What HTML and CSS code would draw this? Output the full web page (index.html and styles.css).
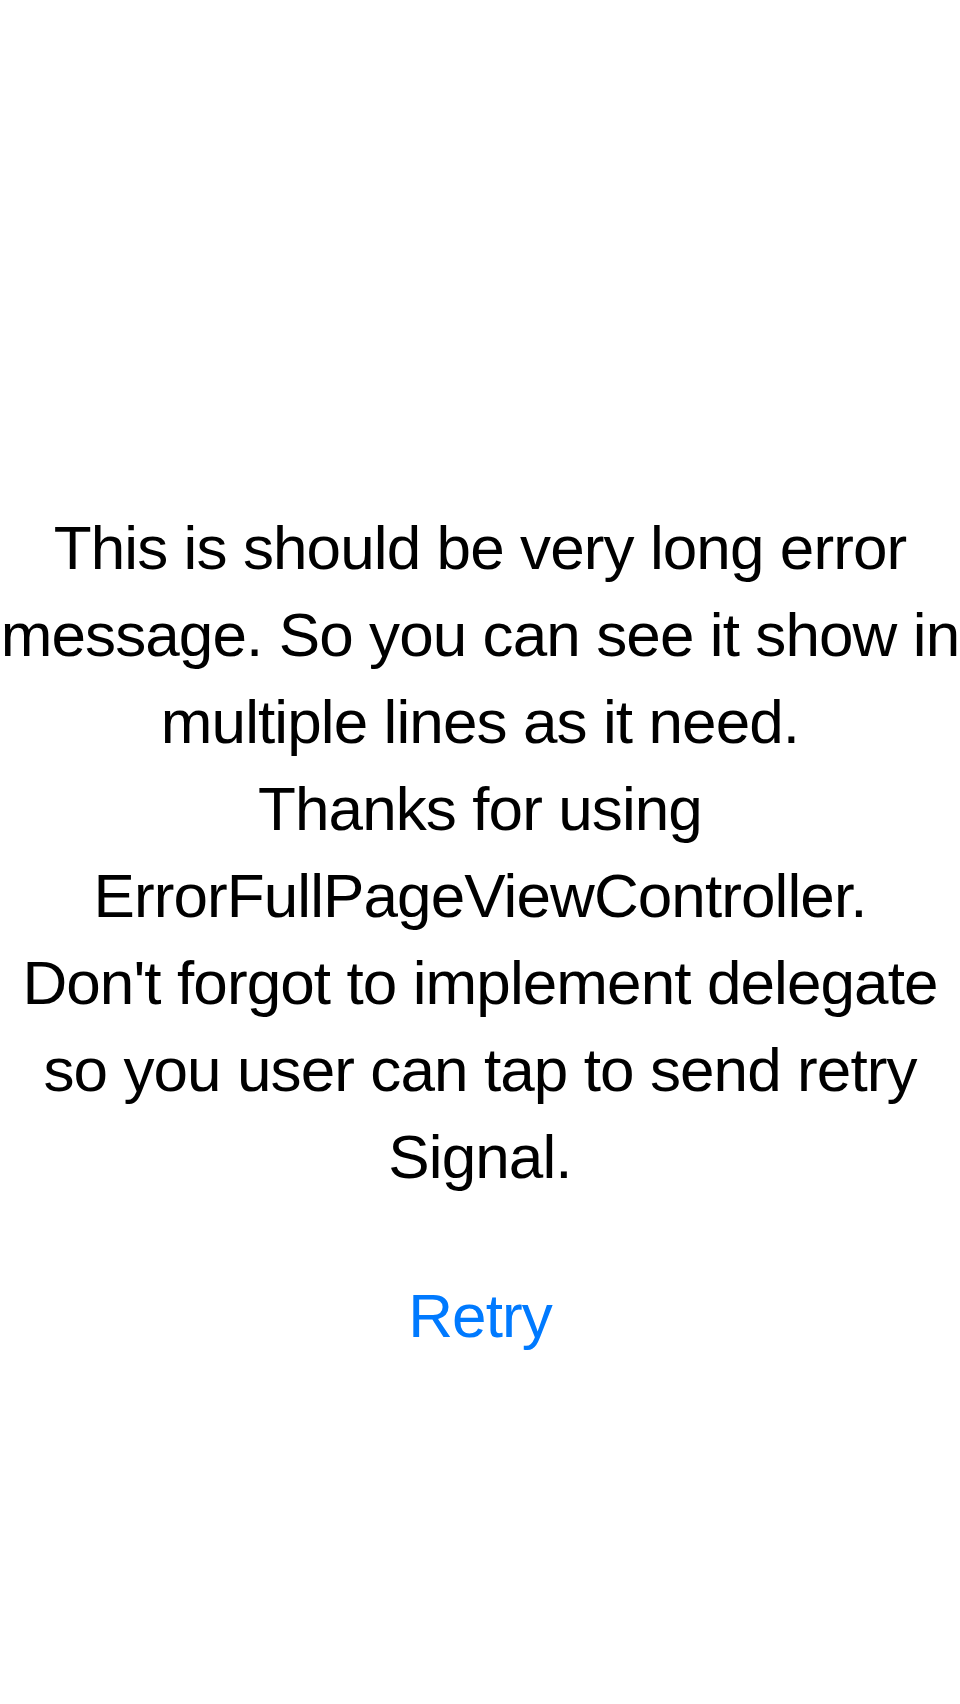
FILE: index.html
```html
<!DOCTYPE html>
<html lang="en">
<head>
<meta charset="utf-8">
<title>Error</title>
<link rel="stylesheet" href="styles.css">
</head>
<body>
<main class="error-page">
  <p class="error-message">This is should be very long error<br>message. So you can see it show in<br>multiple lines as it need.<br>Thanks for using<br>ErrorFullPageViewController.<br>Don't forgot to implement delegate<br>so you user can tap to send retry<br>Signal.</p>
  <button class="retry-button" type="button">Retry</button>
</main>
</body>
</html>
```

FILE: styles.css
```css
html, body {
  margin: 0;
  padding: 0;
  background: #ffffff;
}

.error-page {
  display: flex;
  flex-direction: column;
  align-items: center;
  padding-top: 504px;
  font-family: "Liberation Sans", Arial, sans-serif;
}

.error-message {
  margin: 0;
  width: 100%;
  text-align: center;
  font-size: 62px;
  line-height: 87px;
  letter-spacing: -0.9px;
  color: #000000;
  white-space: nowrap;
}

.retry-button {
  margin-top: 72px;
  padding: 0;
  border: none;
  background: transparent;
  font-family: "Liberation Sans", Arial, sans-serif;
  font-size: 62px;
  line-height: 87px;
  letter-spacing: -0.9px;
  color: #007aff;
  cursor: pointer;
}
```
